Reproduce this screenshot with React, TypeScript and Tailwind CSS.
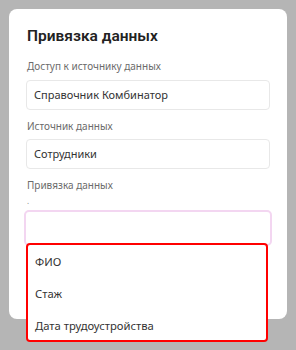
import React from "react";

export default function App() {
  return (
    <div className="w-[296px] h-[350px] bg-[#b5b5b5] pt-[9px] pl-[9px] font-['Noto_Sans','Open_Sans',sans-serif]">
      <div className="relative w-[278px] h-[310px] bg-white rounded-[8px] pl-[17px] pr-[17px] pt-[16px]">
        <div className="text-[15.5px] leading-[22px] font-semibold text-[#222] pl-[1px] font-['Roboto','Noto_Sans',sans-serif]">
          Привязка данных
        </div>
        <div className="mt-[12px] text-[10px] leading-[14px] text-[#6b6b6b] pl-[1px]">Доступ к источнику данных</div>
        <div className="mt-[7px] h-[30px] w-[244px] border border-[#e8e8e8] rounded-[4px] flex items-center pl-[7px] text-[11px] text-[#333]">
          Справочник Комбинатор
        </div>
        <div className="mt-[9px] text-[10px] leading-[14px] text-[#6b6b6b] pl-[1px]">Источник данных</div>
        <div className="mt-[6px] h-[30px] w-[244px] border border-[#e8e8e8] rounded-[4px] flex items-center pl-[7px] text-[11px] text-[#333]">
          Сотрудники
        </div>
        <div className="mt-[9px] text-[10px] leading-[14px] text-[#6b6b6b] pl-[1px]">Привязка данных</div>
        <div className="h-[18px] text-[8px] leading-[18px] text-[#888] pl-[1px]">.</div>
        <div className="-ml-[2px] h-[36px] w-[248px] border-2 border-[#f3d6f1] rounded-[5px]"></div>
        <div className="absolute left-[17px] top-[234px] w-[242px] h-[99px] bg-white border-2 border-[#ff0000] rounded-[4px] py-[1px]">
          <div className="h-[32px] flex items-center pl-[7px] text-[11.25px] text-[#333]">ФИО</div>
          <div className="h-[32px] flex items-center pl-[7px] text-[11.25px] text-[#333]">Стаж</div>
          <div className="h-[32px] flex items-center pl-[7px] text-[11.25px] text-[#333]">Дата трудоустройства</div>
        </div>
      </div>
    </div>
  );
}
